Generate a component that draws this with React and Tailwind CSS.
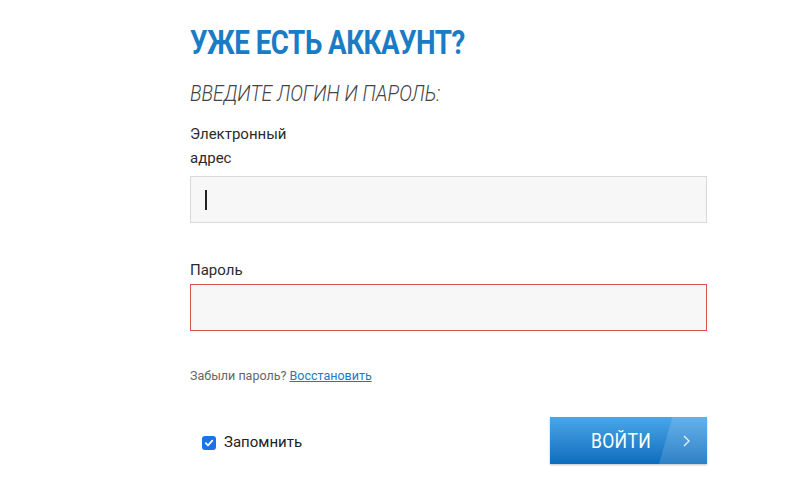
import React from "react";

export default function App() {
  return (
    <div className="w-[800px] h-[495px] bg-white overflow-hidden" style={{ fontFamily: "Roboto, 'Noto Sans', sans-serif" }}>
      <div className="ml-[190px] w-[517px] pt-[23px] flex flex-col">
        <h1 className="text-[33px] leading-[40px] font-bold text-[#1a7cc4] tracking-[-0.6px] origin-left scale-x-[0.84] whitespace-nowrap">УЖЕ ЕСТЬ АККАУНТ?</h1>
        <p className="mt-[17px] text-[22px] leading-[28px] italic font-light text-[#444] origin-left scale-x-[0.88] whitespace-nowrap">ВВЕДИТЕ ЛОГИН И ПАРОЛЬ:</p>
        <label className="mt-[14px] w-[110px] text-[15px] leading-[24px] text-[#2b2b2b]">Электронный адрес</label>
        <div className="mt-[6px] h-[47px] border border-[#d9d9d9] bg-[#f7f7f7] flex items-center pl-[14px]">
          <div className="w-[2px] h-[20px] bg-[#222]"></div>
        </div>
        <label className="mt-[35px] text-[15px] leading-[24px] text-[#2b2b2b]">Пароль</label>
        <div className="mt-[2px] h-[47px] border border-[#d9534f] bg-[#f7f7f7]"></div>
        <p className="mt-[36px] text-[12.5px] leading-[18px] text-[#666]">
          Забыли пароль? <span className="text-[#1a7cc4] underline">Восстановить</span>
        </p>
        <div className="mt-[32px] flex items-center justify-between">
          <div className="flex items-center ml-[12px] mt-[4px]">
            <span className="w-[14px] h-[14px] rounded-[3px] bg-[#1a73e8] flex items-center justify-center">
              <svg width="10" height="10" viewBox="0 0 10 10"><path d="M1.8 5.2 L4 7.3 L8.3 2.6" stroke="white" strokeWidth="1.8" fill="none" strokeLinecap="round" strokeLinejoin="round" /></svg>
            </span>
            <span className="ml-[8px] text-[15px] text-[#222]">Запомнить</span>
          </div>
          <div className="relative w-[157px] h-[47px] overflow-hidden shadow-[0_1px_2px_rgba(0,0,0,0.25)] bg-gradient-to-b from-[#4aa6e8] to-[#0a6dbd] flex items-center">
            <div className="absolute right-0 top-0 h-full w-[48px] bg-[rgba(255,255,255,0.14)] [clip-path:polygon(28%_0,100%_0,100%_100%,0_100%)]"></div>
            <span className="ml-[41px] text-[20px] font-normal text-white origin-left scale-x-[0.88] tracking-[0.3px]">ВОЙТИ</span>
            <svg className="absolute right-[17px] top-[18px]" width="7" height="12" viewBox="0 0 7 12"><path d="M1 1 L6 6 L1 11" stroke="rgba(255,255,255,0.9)" strokeWidth="1.3" fill="none" /></svg>
          </div>
        </div>
      </div>
    </div>
  );
}
